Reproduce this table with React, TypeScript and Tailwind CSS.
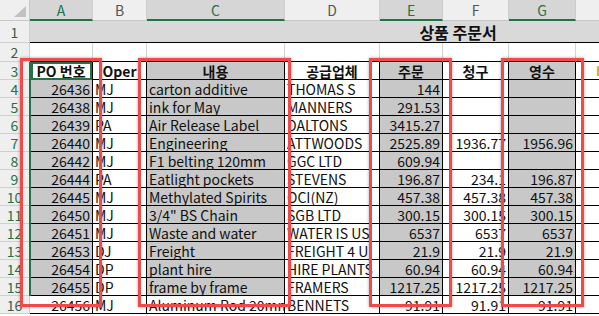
import { ReactNode } from "react";

const font = "font-['Noto_Sans_CJK_KR','Noto_Sans',sans-serif]";

// column widths: A..H
const widths = ["w-[63px]", "w-[54px]", "w-[138px]", "w-[95px]", "w-[63px]", "w-[66px]", "w-[67px]", "w-[67px]"];
const letters = ["A", "B", "C", "D", "E", "F", "G", "H"];
const selectedCols = [0, 2, 4, 6];

const rows: [string, string, string, string, string, string, string][] = [
  ["26436", "MJ", "carton additive", "THOMAS S", "144", "", ""],
  ["26438", "MJ", "ink for May", "MANNERS", "291.53", "", ""],
  ["26439", "PA", "Air Release Label", "DALTONS", "3415.27", "", ""],
  ["26440", "MJ", "Engineering", "ATTWOODS", "2525.89", "1936.77", "1956.96"],
  ["26442", "MJ", "F1 belting 120mm", "GGC LTD", "609.94", "", ""],
  ["26444", "PA", "Eatlight pockets", "STEVENS", "196.87", "234.1", "196.87"],
  ["26445", "MJ", "Methylated Spirits", "OCI(NZ)", "457.38", "457.38", "457.38"],
  ["26450", "MJ", '3/4" BS Chain', "SGB LTD", "300.15", "300.15", "300.15"],
  ["26451", "MJ", "Waste and water", "WATER IS US", "6537", "6537", "6537"],
  ["26453", "DJ", "Freight", "FREIGHT 4 U", "21.9", "21.9", "21.9"],
  ["26454", "DP", "plant hire", "HIRE PLANTS", "60.94", "60.94", "60.94"],
  ["26455", "DP", "frame by frame", "FRAMERS", "1217.25", "1217.25", "1217.25"],
  ["26456", "MJ", "Aluminum Rod 20mm", "BENNETS", "91.91", "91.91", "91.91"],
];

const numericCols = [0, 4, 5, 6];

function Cell({
  w,
  children,
  align = "left",
  fill = false,
  bold = false,
}: {
  w: string;
  children?: ReactNode;
  align?: "left" | "right" | "center";
  fill?: boolean;
  bold?: boolean;
}) {
  const alignCls =
    align === "right" ? "justify-end pr-[2px]" : align === "center" ? "justify-center" : "justify-start pl-[2px]";
  return (
    <div
      className={`${w} shrink-0 h-full flex items-center overflow-hidden whitespace-nowrap border-r border-b border-black text-[14px] leading-[16px] text-[#111] ${alignCls} ${
        fill ? "bg-[#c8c8c8]" : "bg-white"
      } ${bold ? "font-bold" : ""}`}
    >
      {children}
    </div>
  );
}

function RowNum({ n, active }: { n: number; active: boolean }) {
  return (
    <div
      className={`w-[30px] shrink-0 h-full flex items-center justify-center border-r border-b border-[#cfcfcf] bg-[#efefef] text-[14px] leading-[16px] ${
        active ? "text-[#217346]" : "text-[#3d5a4c]"
      }`}
    >
      {n}
    </div>
  );
}

function RedBox({ pos }: { pos: string }) {
  return (
    <div
      className={`absolute ${pos} border-[3px] border-[#f04a4a] shadow-[0_0_3px_rgba(0,0,0,0.35)] pointer-events-none`}
    />
  );
}

export default function App() {
  return (
    <div className={`relative w-[599px] h-[316px] overflow-hidden bg-white ${font}`}>
      {/* column headers */}
      <div className="flex h-[21px]">
        <div className="w-[30px] shrink-0 h-full relative border-r border-b border-[#c6c6c6] bg-[#efefef]">
          <svg className="absolute right-[2px] bottom-[2px]" width="14" height="12" viewBox="0 0 14 12">
            <polygon points="13,0 13,11 1,11" fill="#c2c2c2" />
          </svg>
        </div>
        {letters.map((l, i) => {
          const sel = selectedCols.includes(i);
          return (
            <div
              key={l}
              className={`${widths[i]} shrink-0 h-full flex items-center justify-center border-r border-[#cdcdcd] text-[14px] leading-[16px] ${
                sel
                  ? "bg-[#d6d6d6] text-[#217346] border-b-2 border-b-[#217346]"
                  : "bg-[#efefef] text-[#555] border-b border-b-[#c6c6c6]"
              }`}
            >
              {l}
            </div>
          );
        })}
      </div>

      {/* row 1: title */}
      <div className="flex h-[22px]">
        <RowNum n={1} active={false} />
        <div className="w-[856px] shrink-0 h-full flex items-center justify-center bg-[#d9d9d9] border-b border-black text-[16px] font-bold text-[#111] leading-[18px]">
          상품 주문서
        </div>
      </div>

      {/* row 2: empty */}
      <div className="flex h-[19px]">
        <RowNum n={2} active={false} />
        {widths.map((w, i) => (
          <div key={i} className={`${w} shrink-0 h-full border-r border-[#d4d4d4] border-b border-b-black bg-white`} />
        ))}
      </div>

      {/* row 3: headings */}
      <div className="flex h-[18px]">
        <RowNum n={3} active />
        <Cell w={widths[0]} align="center" bold>PO 번호</Cell>
        <Cell w={widths[1]} align="center" bold>Oper</Cell>
        <Cell w={widths[2]} align="center" bold fill>내용</Cell>
        <Cell w={widths[3]} align="center" bold>공급업체</Cell>
        <Cell w={widths[4]} align="center" bold fill>주문</Cell>
        <Cell w={widths[5]} align="center" bold>청구</Cell>
        <Cell w={widths[6]} align="center" bold fill>영수</Cell>
        <Cell w={widths[7]} align="center" bold>
          <span className="text-[#e0a800]">비고</span>
        </Cell>
      </div>

      {/* data rows 4..16 */}
      {rows.map((r, ri) => {
        const rowNo = ri + 4;
        const inSel = rowNo <= 15;
        return (
          <div key={rowNo} className="flex h-[18px]">
            <RowNum n={rowNo} active={inSel} />
            {r.map((v, ci) => (
              <Cell
                key={ci}
                w={widths[ci]}
                align={numericCols.includes(ci) ? "right" : "left"}
                fill={inSel && selectedCols.includes(ci)}
              >
                {v}
              </Cell>
            ))}
            <Cell w={widths[7]} />
          </div>
        );
      })}

      {/* selection marks */}
      <div className="absolute left-[29px] top-[62px] w-[2px] h-[234px] bg-[#217346]" />
      <div className="absolute left-[31px] top-[62px] w-[61px] h-[18px] border-2 border-[#217346]" />

      {/* red highlight boxes */}
      <RedBox pos="left-[20px] top-[58px] w-[82px] h-[249px]" />
      <RedBox pos="left-[138px] top-[58px] w-[153px] h-[249px]" />
      <RedBox pos="left-[369px] top-[58px] w-[83px] h-[249px]" />
      <RedBox pos="left-[501px] top-[58px] w-[83px] h-[249px]" />
    </div>
  );
}
